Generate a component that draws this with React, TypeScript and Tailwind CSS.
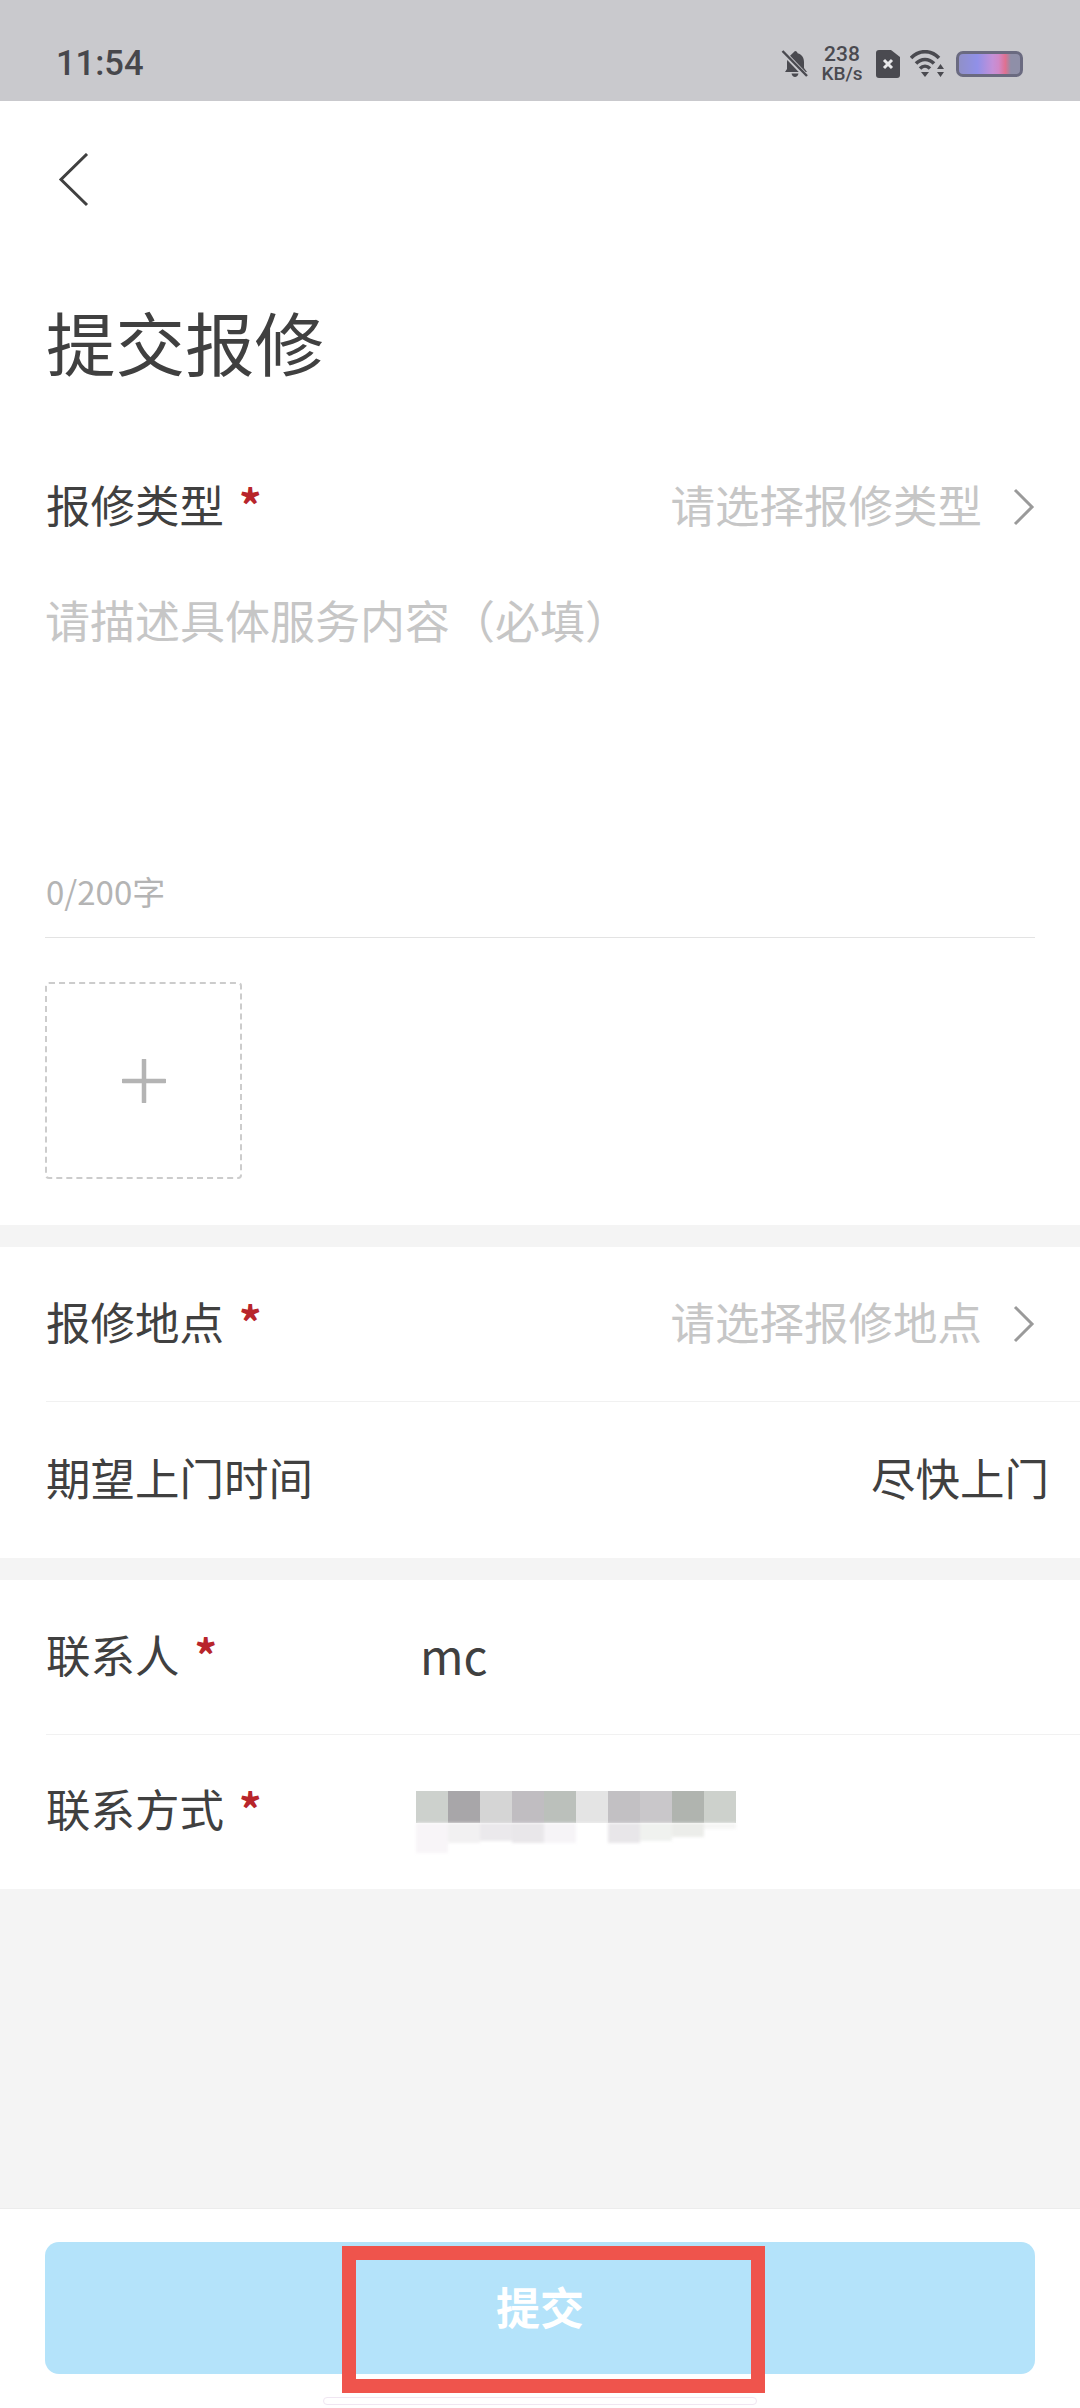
const font = { fontFamily: '"Noto Sans CJK SC", "Noto Sans", sans-serif' };

function Chevron() {
  return (
    <svg width="26" height="40" viewBox="0 0 26 40" fill="none" className="shrink-0">
      <path d="M4 3 L21 20 L4 37" stroke="#9a9a9a" strokeWidth="3" />
    </svg>
  );
}

function Star() {
  return <span className="ml-[15px] font-bold text-[#b8252b]">*</span>;
}

function SelectRow({ label, hint, h }: { label: string; hint: string; h: string }) {
  return (
    <div className={`flex items-center justify-between pr-[43px] ${h}`}>
      <div className="pb-[5px] text-[#404040]">{label}<Star /></div>
      <div className="flex items-center gap-[29px] text-[#c6c6c6]">
        <span className="pb-[5px]">{hint}</span>
        <Chevron />
      </div>
    </div>
  );
}

const cells = ['#cdd1cd', '#a8a6a9', '#d5d5d5', '#c0bdc1', '#bbc0bb', '#e4e4e4', '#c2c0c3', '#c9c7ca', '#b0b4af', '#cdd1cc'];
const smudges = [
  'h-[30px] bg-[#f8f5f8]', 'h-[20px] bg-[#f2f1f2]', 'h-[18px] bg-[#ebe9ec]', 'h-[20px] bg-[#e9e7ea]', 'h-[20px] bg-[#f6f4f7]',
  'h-[1px] bg-white', 'h-[20px] bg-[#e8e6e9]', 'h-[18px] bg-[#f0f2ef]', 'h-[14px] bg-[#ecedea]', 'h-[6px] bg-[#f6f6f5]',
];

export default function App() {
  return (
    <div style={font} className="relative flex h-[2408px] w-[1080px] flex-col overflow-hidden bg-[#f4f4f4] text-[44.5px] leading-none">
      <div className="flex h-[101px] shrink-0 items-center justify-between bg-[#c9c9cd] pl-[56px] pr-[57px] pt-[26px]">
        <span className="text-[34.5px] font-medium text-[#47474c]" style={{ fontFamily: 'Roboto, sans-serif' }}>11:54</span>
        <div className="flex items-center text-[#4a4a50]">
          <svg width="28" height="28" viewBox="0 0 28 28">
            <path d="M14 1c1.500 0 2.500 1 2.600 2.300C21 4.400 23 8 23 12v6l3 4H4l2-3v-7c0-1.500.3-3 1-4.200" fill="#4a4a50" />
            <path d="M10.500 23.500h7c-.4 2-1.800 3.500-3.500 3.500s-3.100-1.500-3.500-3.500z" fill="#4a4a50" />
            <path d="M2 2 L26 27" stroke="#c9c9cd" strokeWidth="5" />
            <path d="M1.500 1 L26 26" stroke="#4a4a50" strokeWidth="2.500" />
          </svg>
          <div className="ml-[14px] flex w-[38px] flex-col items-center font-medium" style={{ fontFamily: 'Roboto, sans-serif' }}>
            <span className="text-[21px] leading-[20px]">238</span>
            <span className="text-[19px] leading-[19px]">KB/s</span>
          </div>
          <svg width="24" height="28" viewBox="0 0 24 28" className="ml-[15px]">
            <path d="M3 0h12l9 7v18a3 3 0 0 1-3 3H3a3 3 0 0 1-3-3V3a3 3 0 0 1 3-3z" fill="#4a4a50" />
            <path d="M8 10l8 8M16 10l-8 8" stroke="#e8e8ea" strokeWidth="3" />
          </svg>
          <svg width="36" height="28" viewBox="0 0 36 28" className="ml-[10px]">
            <path d="M1 8c8-8.500 20-8.500 28 0" stroke="#4a4a50" strokeWidth="3.500" fill="none" />
            <path d="M6 13.500c5-5.500 13-5.500 18 0" stroke="#4a4a50" strokeWidth="3.500" fill="none" />
            <path d="M10 18.500c3-3 7-3 10 0" stroke="#4a4a50" strokeWidth="3.500" fill="none" />
            <path d="M11 22h8l-4 5z" fill="#4a4a50" />
            <path d="M27 19l3.500-5 3.500 5zM27 22l3.500 5 3.500-5z" fill="#4a4a50" />
          </svg>
          <div className="ml-[10px] h-[26px] w-[67px] rounded-[7px] border-[3px] border-[#6a6a80] bg-[linear-gradient(90deg,#9090c8_0%,#9090e8_30%,#c490d8_55%,#d088c8_65%,#e07090_76%,#8f8fa8_85%)]" />
        </div>
      </div>

      <div className="flex h-[1124px] shrink-0 flex-col bg-white">
        <div className="h-[158px] pl-[58px] pt-[52px]">
          <svg width="32" height="54" viewBox="0 0 32 54" fill="none">
            <path d="M29 1 L3 26.500 L29 52" stroke="#404040" strokeWidth="3" />
          </svg>
        </div>
        <h1 className="flex h-[168px] items-center pb-[4px] pl-[46px] text-[69.5px] font-normal text-[#404040]">提交报修</h1>
        <SelectRow label="报修类型" hint="请选择报修类型" h="h-[160px] pl-[46px]" />
        <div className="mx-[45px] flex h-[351px] flex-col border-b-[1px] border-[#e3e3e3]">
          <div className="pt-[10px] text-[45px] text-[#c6c6c6]">请描述具体服务内容（必填）</div>
          <div className="mt-auto mb-[29px] pl-px text-[33px] text-[#b4b4b4]">0/200字</div>
        </div>
        <div className="ml-[45px] mt-[44px] flex h-[197px] w-[197px] items-center justify-center rounded-[4px] border-[2px] border-dashed border-[#cccccc]">
          <svg width="44" height="44" viewBox="0 0 44 44">
            <path d="M1 22H43M22 1V43" stroke="#b4b4b4" strokeWidth="4.500" strokeLinecap="round" />
          </svg>
        </div>
      </div>

      <div className="mt-[22px] flex h-[311px] shrink-0 flex-col bg-white">
        <SelectRow label="报修地点" hint="请选择报修地点" h="h-[155px] ml-[46px] border-b-[1px] border-[#f1f1f1]" />
        <div className="flex h-[156px] items-center justify-between pb-[6px] pl-[46px] pr-[31px] text-[#404040]">
          <span>期望上门时间</span>
          <span>尽快上门</span>
        </div>
      </div>

      <div className="mt-[22px] flex h-[309px] shrink-0 flex-col bg-white text-[#404040]">
        <div className="ml-[46px] flex h-[155px] items-center border-b-[1px] border-[#f1f1f1] pb-[6px]">
          <div className="w-[374px]">联系人<Star /></div>
          <span className="text-[47px]">mc</span>
        </div>
        <div className="ml-[46px] flex h-[154px] items-center">
          <div className="w-[370px] pb-[8px]">联系方式<Star /></div>
          <div className="flex flex-col pt-[20px]">
            <div className="flex">
              {cells.map((c) => (
                <div key={c} className="h-[32px] w-[32px]" style={{ backgroundColor: c }} />
              ))}
            </div>
            <div className="flex items-start blur-[1.5px]">
              {smudges.map((s) => (
                <div key={s} className={`w-[32px] ${s}`} />
              ))}
            </div>
          </div>
        </div>
      </div>

      <div className="mt-auto flex h-[200px] shrink-0 flex-col items-center border-t-[1px] border-[#ececec] bg-white pt-[33px]">
        <div className="flex h-[132px] w-[990px] items-center justify-center rounded-[14px] bg-[#b4e3fa] pb-[4px] text-[44px] font-bold text-white">提交</div>
        <div className="mt-[23px] h-[8px] w-[434px] rounded-full border-[1px] border-[#f0e6f2]" />
      </div>

      <div className="absolute left-[342px] top-[2246px] h-[147px] w-[423px] border-[14px] border-[#ef544c]" />
    </div>
  );
}
